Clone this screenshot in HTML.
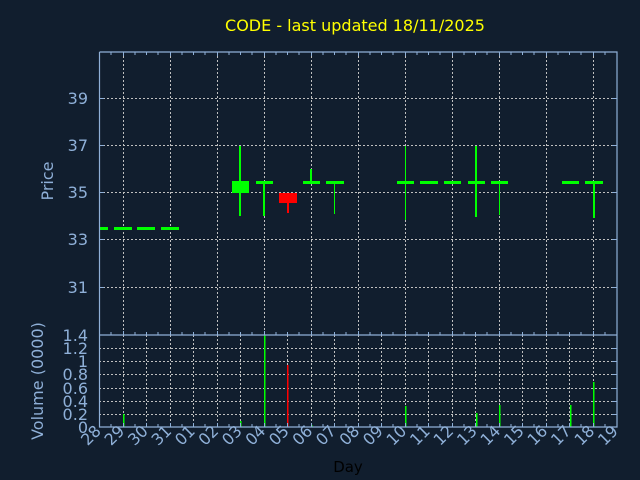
<!DOCTYPE html>
<html><head><style>
html,body{margin:0;padding:0;background:#111e2e;}
svg{display:block;}
text{font-family:"DejaVu Sans","Liberation Sans",sans-serif;}
</style></head><body>
<svg width="640" height="480" viewBox="0 0 640 480" xmlns="http://www.w3.org/2000/svg">
<rect width="640" height="480" fill="#111e2e"/>
<text x="355" y="31" fill="#ffff00" font-size="16" text-anchor="middle">CODE - last updated 18/11/2025</text>
<g stroke="#c0c0c0" stroke-width="1" stroke-dasharray="2,2">
<line x1="99" y1="98.5" x2="617" y2="98.5"/>
<line x1="99" y1="145.5" x2="617" y2="145.5"/>
<line x1="99" y1="192.5" x2="617" y2="192.5"/>
<line x1="99" y1="239.5" x2="617" y2="239.5"/>
<line x1="99" y1="287.5" x2="617" y2="287.5"/>
<line x1="123.5" y1="52" x2="123.5" y2="335"/>
<line x1="170.5" y1="52" x2="170.5" y2="335"/>
<line x1="217.5" y1="52" x2="217.5" y2="335"/>
<line x1="264.5" y1="52" x2="264.5" y2="335"/>
<line x1="311.5" y1="52" x2="311.5" y2="335"/>
<line x1="358.5" y1="52" x2="358.5" y2="335"/>
<line x1="405.5" y1="52" x2="405.5" y2="335"/>
<line x1="452.5" y1="52" x2="452.5" y2="335"/>
<line x1="499.5" y1="52" x2="499.5" y2="335"/>
<line x1="546.5" y1="52" x2="546.5" y2="335"/>
<line x1="593.5" y1="52" x2="593.5" y2="335"/>
<line x1="99" y1="348.5" x2="617" y2="348.5"/>
<line x1="99" y1="361.5" x2="617" y2="361.5"/>
<line x1="99" y1="374.5" x2="617" y2="374.5"/>
<line x1="99" y1="388.5" x2="617" y2="388.5"/>
<line x1="99" y1="401.5" x2="617" y2="401.5"/>
<line x1="99" y1="414.5" x2="617" y2="414.5"/>
<line x1="123.5" y1="335" x2="123.5" y2="427"/>
<line x1="146.5" y1="335" x2="146.5" y2="427"/>
<line x1="170.5" y1="335" x2="170.5" y2="427"/>
<line x1="193.5" y1="335" x2="193.5" y2="427"/>
<line x1="217.5" y1="335" x2="217.5" y2="427"/>
<line x1="240.5" y1="335" x2="240.5" y2="427"/>
<line x1="264.5" y1="335" x2="264.5" y2="427"/>
<line x1="287.5" y1="335" x2="287.5" y2="427"/>
<line x1="311.5" y1="335" x2="311.5" y2="427"/>
<line x1="334.5" y1="335" x2="334.5" y2="427"/>
<line x1="358.5" y1="335" x2="358.5" y2="427"/>
<line x1="381.5" y1="335" x2="381.5" y2="427"/>
<line x1="405.5" y1="335" x2="405.5" y2="427"/>
<line x1="428.5" y1="335" x2="428.5" y2="427"/>
<line x1="452.5" y1="335" x2="452.5" y2="427"/>
<line x1="475.5" y1="335" x2="475.5" y2="427"/>
<line x1="499.5" y1="335" x2="499.5" y2="427"/>
<line x1="522.5" y1="335" x2="522.5" y2="427"/>
<line x1="546.5" y1="335" x2="546.5" y2="427"/>
<line x1="569.5" y1="335" x2="569.5" y2="427"/>
<line x1="593.5" y1="335" x2="593.5" y2="427"/>
</g>
<g fill="#00ff00">
<rect x="99" y="227" width="9" height="3"/>
<rect x="114" y="227" width="18" height="3"/>
<rect x="137" y="227" width="18" height="3"/>
<rect x="161" y="227" width="18" height="3"/>
<rect x="239" y="146" width="2" height="70"/>
<rect x="232" y="181" width="17" height="12"/>
<rect x="256" y="181" width="17" height="3"/>
<rect x="263" y="181" width="2" height="35"/>
<rect x="303" y="181" width="17" height="3"/>
<rect x="310" y="169" width="2" height="13"/>
<rect x="326" y="181" width="18" height="3"/>
<rect x="334" y="181" width="1" height="33"/>
<rect x="397" y="181" width="17" height="3"/>
<rect x="405" y="146" width="1" height="74"/>
<rect x="420" y="181" width="18" height="3"/>
<rect x="444" y="181" width="17" height="3"/>
<rect x="468" y="181" width="17" height="3"/>
<rect x="475" y="146" width="2" height="71"/>
<rect x="491" y="181" width="17" height="3"/>
<rect x="499" y="181" width="1" height="34"/>
<rect x="562" y="181" width="17" height="3"/>
<rect x="585" y="181" width="18" height="3"/>
<rect x="593" y="181" width="2" height="37"/>
<rect x="123" y="414" width="1.5" height="13"/>
<rect x="240" y="421" width="1.5" height="6"/>
<rect x="264" y="335" width="1.5" height="92"/>
<rect x="311" y="425" width="1.5" height="2"/>
<rect x="405" y="406" width="1.5" height="21"/>
<rect x="476" y="413" width="1.5" height="14"/>
<rect x="499" y="405" width="1.5" height="22"/>
<rect x="570" y="405" width="1.5" height="22"/>
<rect x="593" y="382" width="1.5" height="45"/>
</g>
<rect x="279" y="193" width="18" height="10" fill="#ff0000"/>
<rect x="287" y="203" width="2" height="10" fill="#ff0000"/>
<rect x="287" y="365" width="1.5" height="62" fill="#ff0000"/>
<g stroke="#8fb0d8" stroke-width="1.2" fill="none">
<path d="M99.5 52 V427 H617 V52 H99.5"/>
<line x1="99" y1="335" x2="617" y2="335"/>
</g>
<g stroke="#8fb0d8" stroke-width="1">
<path d="M111 52v3M123.5 52v4M135 52v3M146.5 52v3M158 52v3M170.5 52v4M182 52v3M193.5 52v3M205 52v3M217.5 52v4M229 52v3M240.5 52v3M252 52v3M264.5 52v4M276 52v3M287.5 52v3M299 52v3M311.5 52v4M323 52v3M334.5 52v3M346 52v3M358.5 52v4M370 52v3M381.5 52v3M393 52v3M405.5 52v4M417 52v3M428.5 52v3M440 52v3M452.5 52v4M464 52v3M475.5 52v3M487 52v3M499.5 52v4M511 52v3M522.5 52v3M534 52v3M546.5 52v4M558 52v3M569.5 52v3M581 52v3M593.5 52v4M605 52v3"/>
<path d="M111 335v-3M123.5 335v-4M135 335v-3M146.5 335v-3M158 335v-3M170.5 335v-4M182 335v-3M193.5 335v-3M205 335v-3M217.5 335v-4M229 335v-3M240.5 335v-3M252 335v-3M264.5 335v-4M276 335v-3M287.5 335v-3M299 335v-3M311.5 335v-4M323 335v-3M334.5 335v-3M346 335v-3M358.5 335v-4M370 335v-3M381.5 335v-3M393 335v-3M405.5 335v-4M417 335v-3M428.5 335v-3M440 335v-3M452.5 335v-4M464 335v-3M475.5 335v-3M487 335v-3M499.5 335v-4M511 335v-3M522.5 335v-3M534 335v-3M546.5 335v-4M558 335v-3M569.5 335v-3M581 335v-3M593.5 335v-4M605 335v-3"/>
<path d="M111 427v-3M123.5 427v-4M135 427v-3M146.5 427v-4M158 427v-3M170.5 427v-4M182 427v-3M193.5 427v-4M205 427v-3M217.5 427v-4M229 427v-3M240.5 427v-4M252 427v-3M264.5 427v-4M276 427v-3M287.5 427v-4M299 427v-3M311.5 427v-4M323 427v-3M334.5 427v-4M346 427v-3M358.5 427v-4M370 427v-3M381.5 427v-4M393 427v-3M405.5 427v-4M417 427v-3M428.5 427v-4M440 427v-3M452.5 427v-4M464 427v-3M475.5 427v-4M487 427v-3M499.5 427v-4M511 427v-3M522.5 427v-4M534 427v-3M546.5 427v-4M558 427v-3M569.5 427v-4M581 427v-3M593.5 427v-4M605 427v-3"/>
<path d="M99 98.5h5M99 145.5h5M99 192.5h5M99 239.5h5M99 287.5h5M617 98.5h-5M617 145.5h-5M617 192.5h-5M617 239.5h-5M617 287.5h-5M617 348.5h-5M617 361.5h-5M617 374.5h-5M617 388.5h-5M617 401.5h-5M617 414.5h-5"/>
</g>
<g fill="#8fb0d8" font-size="16" text-anchor="end">
<text x="88" y="104">39</text>
<text x="88" y="151">37</text>
<text x="88" y="198">35</text>
<text x="88" y="245">33</text>
<text x="88" y="293">31</text>
<text x="88" y="341">1.4</text>
<text x="88" y="354">1.2</text>
<text x="88" y="367">1</text>
<text x="88" y="380">0.8</text>
<text x="88" y="394">0.6</text>
<text x="88" y="407">0.4</text>
<text x="88" y="420">0.2</text>
<text x="88" y="433">0</text>
</g>
<text transform="translate(53,181) rotate(-90)" fill="#8fb0d8" font-size="16" text-anchor="middle">Price</text>
<text transform="translate(43,381) rotate(-90)" fill="#8fb0d8" font-size="16" text-anchor="middle">Volume (0000)</text>
<text x="348" y="472" fill="#000000" font-size="15" text-anchor="middle">Day</text>
<g fill="#8fb0d8" font-size="16" text-anchor="end">
<text transform="translate(102,432) rotate(-45)">28</text>
<text transform="translate(125.5,432) rotate(-45)">29</text>
<text transform="translate(149,432) rotate(-45)">30</text>
<text transform="translate(172.5,432) rotate(-45)">31</text>
<text transform="translate(196,432) rotate(-45)">01</text>
<text transform="translate(219.5,432) rotate(-45)">02</text>
<text transform="translate(243,432) rotate(-45)">03</text>
<text transform="translate(266.5,432) rotate(-45)">04</text>
<text transform="translate(290,432) rotate(-45)">05</text>
<text transform="translate(313.5,432) rotate(-45)">06</text>
<text transform="translate(337,432) rotate(-45)">07</text>
<text transform="translate(360.5,432) rotate(-45)">08</text>
<text transform="translate(384,432) rotate(-45)">09</text>
<text transform="translate(407.5,432) rotate(-45)">10</text>
<text transform="translate(431,432) rotate(-45)">11</text>
<text transform="translate(454.5,432) rotate(-45)">12</text>
<text transform="translate(478,432) rotate(-45)">13</text>
<text transform="translate(501.5,432) rotate(-45)">14</text>
<text transform="translate(525,432) rotate(-45)">15</text>
<text transform="translate(548.5,432) rotate(-45)">16</text>
<text transform="translate(572,432) rotate(-45)">17</text>
<text transform="translate(595.5,432) rotate(-45)">18</text>
<text transform="translate(619,432) rotate(-45)">19</text>
</g>
</svg>
</body></html>
